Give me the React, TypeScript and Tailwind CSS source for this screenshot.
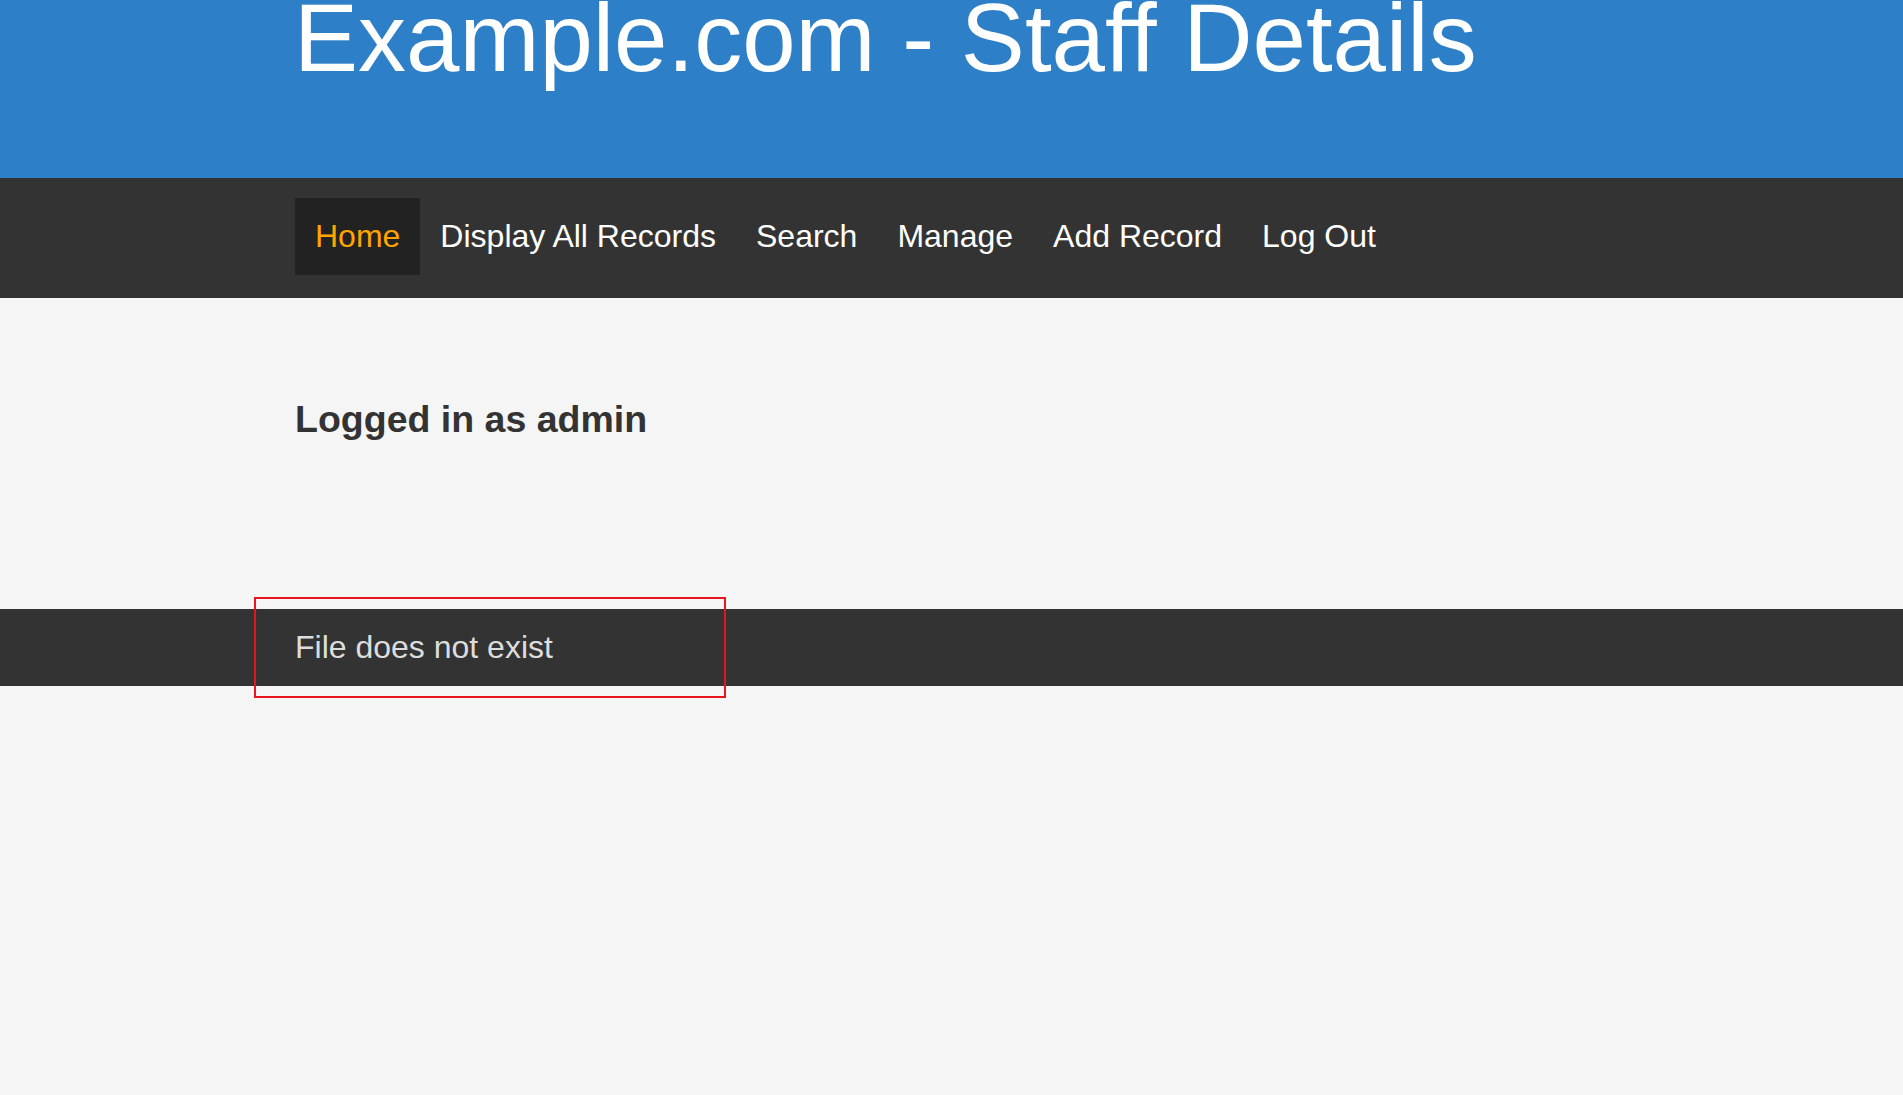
const navItems = ['Home', 'Display All Records', 'Search', 'Manage', 'Add Record', 'Log Out'];

export default function App() {
  return (
    <div className="min-h-[1095px] bg-[#f5f5f5] font-['Liberation_Sans',Arial,sans-serif] relative">
      <header className="h-[178px] bg-[#2d7fc8] overflow-hidden">
        <div className="pl-[294px]">
          <h1 className="text-[96px] leading-none text-white font-normal mt-[-10px] whitespace-nowrap">Example.com - Staff Details</h1>
        </div>
      </header>

      <nav className="h-[120px] bg-[#333333] pt-5">
        <ul className="flex pl-[295px]">
          {navItems.map((item, i) => (
            <li key={item}>
              <a
                href="#"
                className={`block px-5 py-5 text-[32px] leading-[normal] ${i === 0 ? 'bg-[#222222] text-[#ffa500]' : 'text-white'}`}
              >
                {item}
              </a>
            </li>
          ))}
        </ul>
      </nav>

      <main className="h-[311px] pt-[103px] pl-[295px]">
        <h2 className="text-[37.5px] leading-none font-bold text-[#333333]">Logged in as admin</h2>
      </main>

      <footer className="bg-[#333333] py-5 pl-[295px]">
        <p className="text-[32px] leading-[normal] text-[#dddddd]">File does not exist</p>
      </footer>

      {/* highlight box drawn over the footer message */}
      <div className="absolute left-[254px] top-[597px] w-[472px] h-[101px] border-2 border-[#e8141e] pointer-events-none" />
    </div>
  );
}
